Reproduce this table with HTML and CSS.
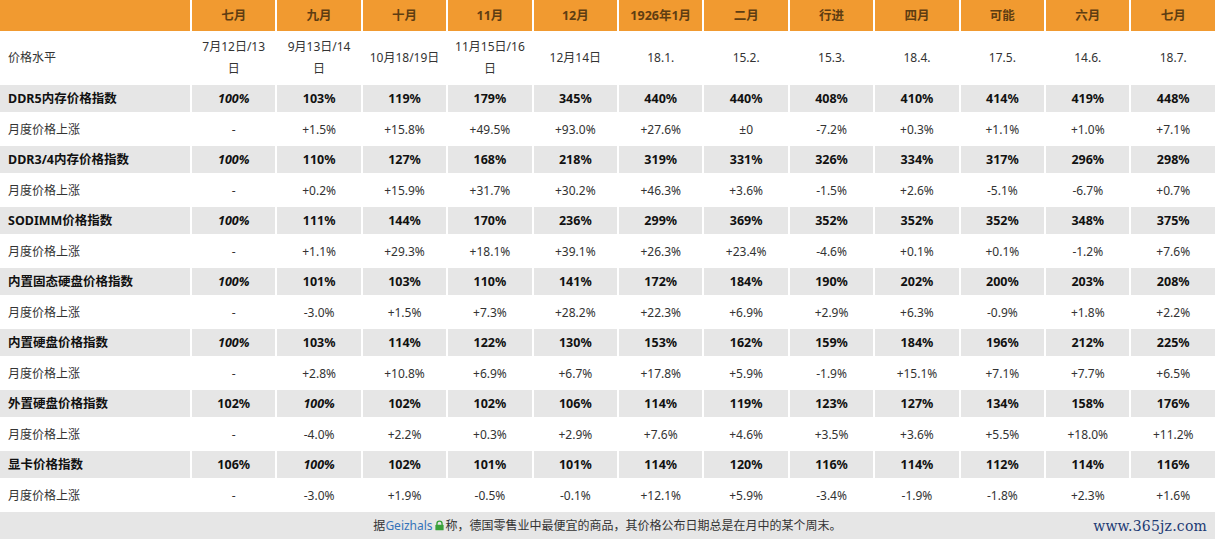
FILE: index.html
```html
<!DOCTYPE html>
<html lang="zh">
<head>
<meta charset="utf-8">
<link rel="stylesheet" href="styles.css">
</head>
<body>
<div class="page">
<table class="prices">
  <tr class="head">
    <th class="label"></th><th>七月</th><th>九月</th><th>十月</th><th>11月</th><th>12月</th><th>1926年1月</th><th>二月</th><th>行进</th><th>四月</th><th>可能</th><th>六月</th><th>七月</th>
  </tr>
  <tr class="dates">
    <td class="label">价格水平</td><td>7月12日/13日</td><td>9月13日/14日</td><td>10月18/19日</td><td>11月15日/16日</td><td>12月14日</td><td>18.1.</td><td>15.2.</td><td>15.3.</td><td>18.4.</td><td>17.5.</td><td>14.6.</td><td>18.7.</td>
  </tr>
  <tr class="index">
    <td class="label">DDR5内存价格指数</td><td class="base">100%</td><td>103%</td><td>119%</td><td>179%</td><td>345%</td><td>440%</td><td>440%</td><td>408%</td><td>410%</td><td>414%</td><td>419%</td><td>448%</td>
  </tr>
  <tr class="change">
    <td class="label">月度价格上涨</td><td>-</td><td>+1.5%</td><td>+15.8%</td><td>+49.5%</td><td>+93.0%</td><td>+27.6%</td><td>±0</td><td>-7.2%</td><td>+0.3%</td><td>+1.1%</td><td>+1.0%</td><td>+7.1%</td>
  </tr>
  <tr class="index">
    <td class="label">DDR3/4内存价格指数</td><td class="base">100%</td><td>110%</td><td>127%</td><td>168%</td><td>218%</td><td>319%</td><td>331%</td><td>326%</td><td>334%</td><td>317%</td><td>296%</td><td>298%</td>
  </tr>
  <tr class="change">
    <td class="label">月度价格上涨</td><td>-</td><td>+0.2%</td><td>+15.9%</td><td>+31.7%</td><td>+30.2%</td><td>+46.3%</td><td>+3.6%</td><td>-1.5%</td><td>+2.6%</td><td>-5.1%</td><td>-6.7%</td><td>+0.7%</td>
  </tr>
  <tr class="index">
    <td class="label">SODIMM价格指数</td><td class="base">100%</td><td>111%</td><td>144%</td><td>170%</td><td>236%</td><td>299%</td><td>369%</td><td>352%</td><td>352%</td><td>352%</td><td>348%</td><td>375%</td>
  </tr>
  <tr class="change">
    <td class="label">月度价格上涨</td><td>-</td><td>+1.1%</td><td>+29.3%</td><td>+18.1%</td><td>+39.1%</td><td>+26.3%</td><td>+23.4%</td><td>-4.6%</td><td>+0.1%</td><td>+0.1%</td><td>-1.2%</td><td>+7.6%</td>
  </tr>
  <tr class="index">
    <td class="label">内置固态硬盘价格指数</td><td class="base">100%</td><td>101%</td><td>103%</td><td>110%</td><td>141%</td><td>172%</td><td>184%</td><td>190%</td><td>202%</td><td>200%</td><td>203%</td><td>208%</td>
  </tr>
  <tr class="change">
    <td class="label">月度价格上涨</td><td>-</td><td>-3.0%</td><td>+1.5%</td><td>+7.3%</td><td>+28.2%</td><td>+22.3%</td><td>+6.9%</td><td>+2.9%</td><td>+6.3%</td><td>-0.9%</td><td>+1.8%</td><td>+2.2%</td>
  </tr>
  <tr class="index">
    <td class="label">内置硬盘价格指数</td><td class="base">100%</td><td>103%</td><td>114%</td><td>122%</td><td>130%</td><td>153%</td><td>162%</td><td>159%</td><td>184%</td><td>196%</td><td>212%</td><td>225%</td>
  </tr>
  <tr class="change">
    <td class="label">月度价格上涨</td><td>-</td><td>+2.8%</td><td>+10.8%</td><td>+6.9%</td><td>+6.7%</td><td>+17.8%</td><td>+5.9%</td><td>-1.9%</td><td>+15.1%</td><td>+7.1%</td><td>+7.7%</td><td>+6.5%</td>
  </tr>
  <tr class="index">
    <td class="label">外置硬盘价格指数</td><td>102%</td><td class="base">100%</td><td>102%</td><td>102%</td><td>106%</td><td>114%</td><td>119%</td><td>123%</td><td>127%</td><td>134%</td><td>158%</td><td>176%</td>
  </tr>
  <tr class="change">
    <td class="label">月度价格上涨</td><td>-</td><td>-4.0%</td><td>+2.2%</td><td>+0.3%</td><td>+2.9%</td><td>+7.6%</td><td>+4.6%</td><td>+3.5%</td><td>+3.6%</td><td>+5.5%</td><td>+18.0%</td><td>+11.2%</td>
  </tr>
  <tr class="index">
    <td class="label">显卡价格指数</td><td>106%</td><td class="base">100%</td><td>102%</td><td>101%</td><td>101%</td><td>114%</td><td>120%</td><td>116%</td><td>114%</td><td>112%</td><td>114%</td><td>116%</td>
  </tr>
  <tr class="change">
    <td class="label">月度价格上涨</td><td>-</td><td>-3.0%</td><td>+1.9%</td><td>-0.5%</td><td>-0.1%</td><td>+12.1%</td><td>+5.9%</td><td>-3.4%</td><td>-1.9%</td><td>-1.8%</td><td>+2.3%</td><td>+1.6%</td>
  </tr>
  <tr class="foot">
    <td colspan="13">据<a class="src" href="#">Geizhals</a><svg class="lock" viewBox="0 0 12 12" width="11" height="11"><path d="M3.2 5.5V4a2.8 2.8 0 0 1 5.6 0v1.5" fill="none" stroke="#3aa13a" stroke-width="1.5"/><rect x="1.5" y="5.3" width="9" height="6" rx="0.8" fill="#3aa13a"/></svg>称，德国零售业中最便宜的商品，其价格公布日期总是在月中的某个周末。</td>
  </tr>
</table>
<div class="watermark">www.365jz.com</div>
</div>
</body>
</html>
```

FILE: styles.css
```css
html, body {
  margin: 0;
  padding: 0;
  background: #ffffff;
}

.page {
  position: relative;
  width: 1215px;
  height: 546px;
  overflow: hidden;
  font-family: "Noto Sans", "Noto Sans CJK SC", sans-serif;
  font-size: 12px;
  color: #222222;
}

.prices {
  border-collapse: separate;
  border-spacing: 2px;
  width: 1219px;
  margin: -2px 0 0 -2px;
  table-layout: fixed;
}

.prices th,
.prices td {
  padding: 0 6px;
  text-align: center;
  vertical-align: middle;
  font-weight: normal;
  line-height: 17px;
}

.prices .label {
  width: 176px;
  text-align: left;
  padding-left: 8px;
}

.head th {
  height: 31px;
  background: #f19a30;
  color: #5e3d12;
  font-weight: bold;
  font-size: 12.5px;
}

.dates td {
  height: 50px;
  color: #333333;
  line-height: 22px;
}

.index td {
  height: 27px;
  background: #e6e6e6;
  font-weight: bold;
  font-size: 12.5px;
  color: #111111;
}

.index td.base {
  font-style: italic;
}

.change td {
  height: 30px;
  color: #333333;
}

.foot td {
  height: 27px;
  background: #e6e6e6;
  color: #333333;
  padding: 0;
}

.src {
  color: #3573b9;
  text-decoration: none;
}

.lock {
  vertical-align: -1px;
  margin: 0 1px;
}

.watermark {
  position: absolute;
  right: 8px;
  top: 518px;
  font-family: "DejaVu Serif", "Liberation Serif", serif;
  font-size: 14px;
  color: #1c3a74;
  letter-spacing: 0.2px;
}
```
